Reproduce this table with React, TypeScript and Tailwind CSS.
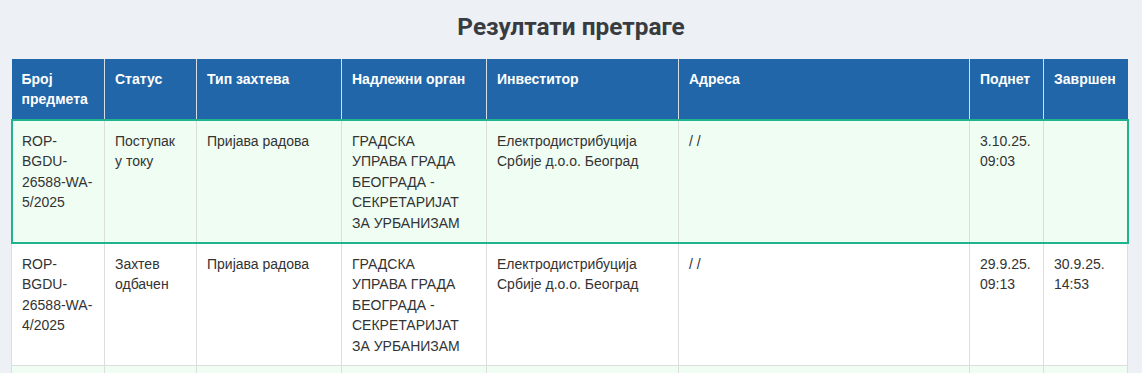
const columns = [
  { label: 'Број предмета', width: 'w-[93px]' },
  { label: 'Статус', width: 'w-[92px]' },
  { label: 'Тип захтева', width: 'w-[145px]' },
  { label: 'Надлежни орган', width: 'w-[145px]' },
  { label: 'Инвеститор', width: 'w-[192px]' },
  { label: 'Адреса', width: 'w-[291px]' },
  { label: 'Поднет', width: 'w-[74px]' },
  { label: 'Завршен', width: 'w-[84px]' },
];

type Row = {
  number: string[];
  status: string[];
  type: string;
  organ: string[];
  investor: string[];
  address: string;
  submitted: string[];
  finished: string[];
};

const rows: Row[] = [
  {
    number: ['ROP-', 'BGDU-', '26588-WA-', '5/2025'],
    status: ['Поступак', 'у току'],
    type: 'Пријава радова',
    organ: ['ГРАДСКА', 'УПРАВА ГРАДА', 'БЕОГРАДА -', 'СЕКРЕТАРИЈАТ', 'ЗА УРБАНИЗАМ'],
    investor: ['Електродистрибуција', 'Србије д.о.о. Београд'],
    address: '/ /',
    submitted: ['3.10.25.', '09:03'],
    finished: [],
  },
  {
    number: ['ROP-', 'BGDU-', '26588-WA-', '4/2025'],
    status: ['Захтев', 'одбачен'],
    type: 'Пријава радова',
    organ: ['ГРАДСКА', 'УПРАВА ГРАДА', 'БЕОГРАДА -', 'СЕКРЕТАРИЈАТ', 'ЗА УРБАНИЗАМ'],
    investor: ['Електродистрибуција', 'Србије д.о.о. Београд'],
    address: '/ /',
    submitted: ['29.9.25.', '09:13'],
    finished: ['30.9.25.', '14:53'],
  },
];

function Lines({ items }: { items: string[] }) {
  return (
    <>
      {items.map((t, i) => (
        <div key={i}>{t}</div>
      ))}
    </>
  );
}

const td = 'border border-[#dddddd] px-[10px] pt-[11px] pb-[9px] align-top';

export default function App() {
  return (
    <div className="h-[373px] overflow-hidden bg-[#edf0f5] font-['Liberation_Sans',Arial,sans-serif]">
      <h1 className="pt-[12px] mb-[17px] text-center text-[24.4px] leading-[30px] font-bold text-[#383c40] font-['Roboto',sans-serif]">
        Резултати претраге
      </h1>

      <div className="pl-[11px]">
        <table className="w-[1116px] table-fixed border-collapse text-[14px]">
          <colgroup>
            {columns.map((c) => (
              <col key={c.label} className={c.width} />
            ))}
          </colgroup>
          <thead>
            <tr className="bg-[#2166a8] leading-[20px]">
              {columns.map((c) => (
                <th
                  key={c.label}
                  className="border-x border-[#d8dde3] px-[10px] py-[10px] text-left align-top font-bold text-white first:border-l-0 last:border-r-0"
                >
                  {c.label}
                </th>
              ))}
            </tr>
          </thead>
          <tbody className="text-[#333333] leading-[20.4px]">
            {rows.map((r, i) => (
              <tr
                key={i}
                className={
                  i === 0
                    ? 'bg-[#effdf3] outline-2 outline-offset-[-1px] outline-[#1fb38e]'
                    : 'bg-white'
                }
              >
                <td className={td}>
                  <Lines items={r.number} />
                </td>
                <td className={td}>
                  <Lines items={r.status} />
                </td>
                <td className={td}>{r.type}</td>
                <td className={td}>
                  <Lines items={r.organ} />
                </td>
                <td className={td}>
                  <Lines items={r.investor} />
                </td>
                <td className={td}>{r.address}</td>
                <td className={td}>
                  <Lines items={r.submitted} />
                </td>
                <td className={td}>
                  <Lines items={r.finished} />
                </td>
              </tr>
            ))}
            {/* next row, cut by the bottom of the window */}
            <tr className="bg-[#effdf3]">
              {columns.map((c) => (
                <td key={c.label} className={`${td} h-[40px]`} />
              ))}
            </tr>
          </tbody>
        </table>
      </div>
    </div>
  );
}
